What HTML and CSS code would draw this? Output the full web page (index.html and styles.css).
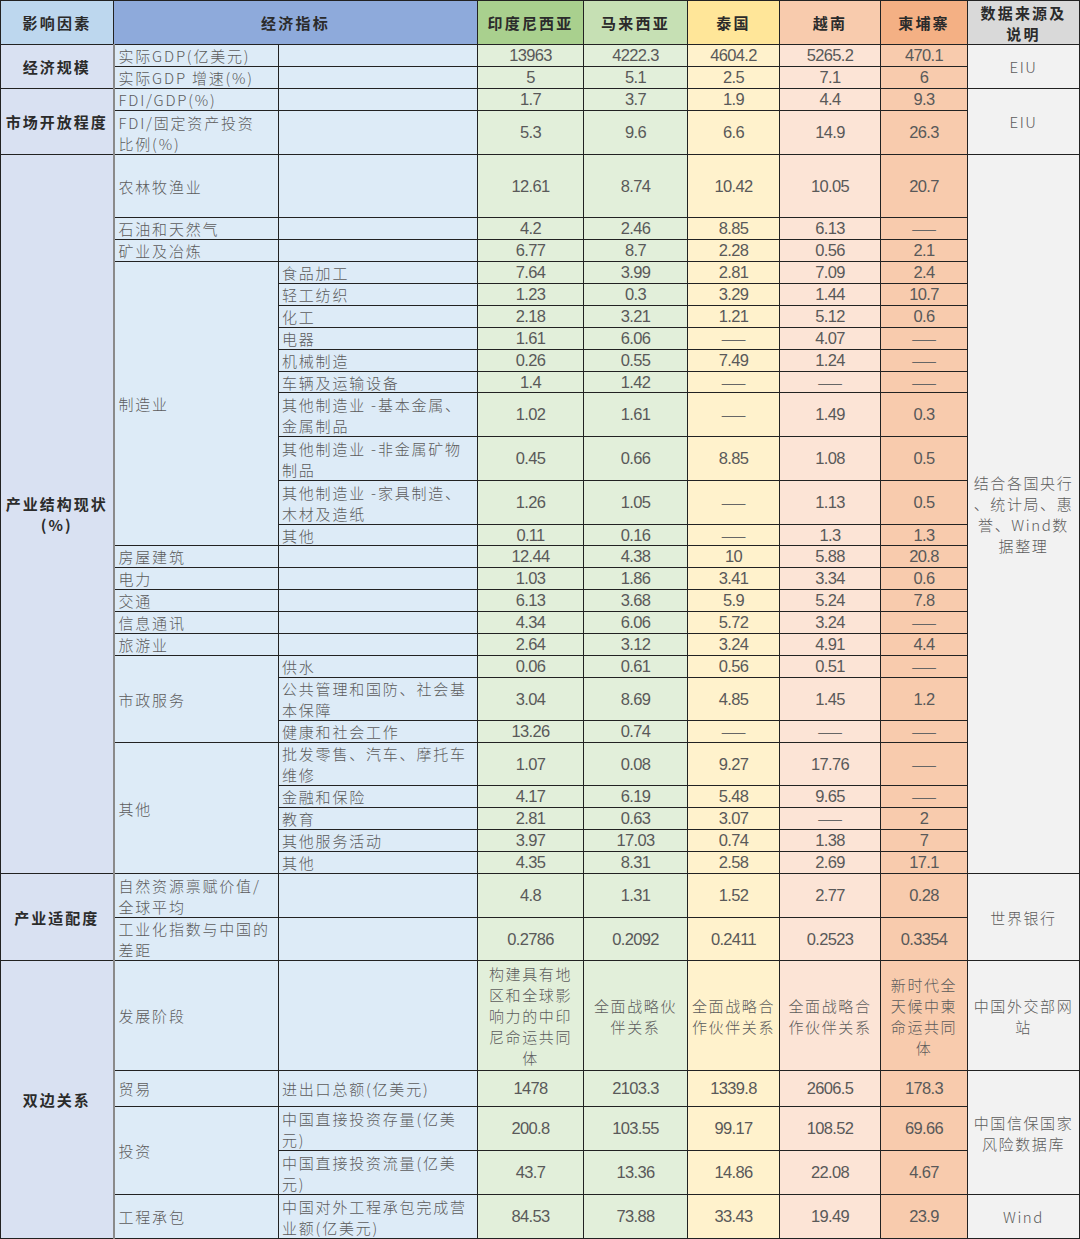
FILE: index.html
```html
<!DOCTYPE html>
<html lang="zh-CN">
<head>
<meta charset="utf-8">
<title>影响因素与经济指标</title>
<link rel="stylesheet" href="styles.css">
</head>
<body>
<table class="grid">
  <colgroup>
    <col class="w-a"><col class="w-b"><col class="w-c"><col class="w-d"><col class="w-e"><col class="w-f"><col class="w-g"><col class="w-h"><col class="w-i">
  </colgroup>
  <thead>
    <tr class="r44">
      <th class="hd-a">影响因素</th>
      <th class="hd-b" colspan="2">经济指标</th>
      <th class="hd-d">印度尼西亚</th>
      <th class="hd-e">马来西亚</th>
      <th class="hd-f">泰国</th>
      <th class="hd-g">越南</th>
      <th class="hd-h">柬埔寨</th>
      <th class="hd-i">数据来源及<br>说明</th>
    </tr>
  </thead>
  <tbody>
    <tr class="r22">
      <td class="f" rowspan="2">经济规模</td>
      <td class="b">实际GDP(亿美元)</td><td class="c"></td>
      <td class="d n">13963</td><td class="e n">4222.3</td><td class="t n">4604.2</td><td class="v n">5265.2</td><td class="k n">470.1</td>
      <td class="s" rowspan="2">EIU</td>
    </tr>
    <tr class="r22">
      <td class="b">实际GDP 增速(%)</td><td class="c"></td>
      <td class="d n">5</td><td class="e n">5.1</td><td class="t n">2.5</td><td class="v n">7.1</td><td class="k n">6</td>
    </tr>
    <tr class="r22">
      <td class="f" rowspan="2">市场开放程度</td>
      <td class="b">FDI/GDP(%)</td><td class="c"></td>
      <td class="d n">1.7</td><td class="e n">3.7</td><td class="t n">1.9</td><td class="v n">4.4</td><td class="k n">9.3</td>
      <td class="s" rowspan="2">EIU</td>
    </tr>
    <tr class="r44">
      <td class="b">FDI/固定资产投资<br>比例(%)</td><td class="c"></td>
      <td class="d n">5.3</td><td class="e n">9.6</td><td class="t n">6.6</td><td class="v n">14.9</td><td class="k n">26.3</td>
    </tr>

    <tr class="r63">
      <td class="f" rowspan="26">产业结构现状<br>(%)</td>
      <td class="b">农林牧渔业</td><td class="c"></td>
      <td class="d n">12.61</td><td class="e n">8.74</td><td class="t n">10.42</td><td class="v n">10.05</td><td class="k n">20.7</td>
      <td class="s" rowspan="26">结合各国央行<br>、统计局、惠<br>誉、Wind数<br>据整理</td>
    </tr>
    <tr class="r22">
      <td class="b">石油和天然气</td><td class="c"></td>
      <td class="d n">4.2</td><td class="e n">2.46</td><td class="t n">8.85</td><td class="v n">6.13</td><td class="k n dash">——</td>
    </tr>
    <tr class="r22">
      <td class="b">矿业及冶炼</td><td class="c"></td>
      <td class="d n">6.77</td><td class="e n">8.7</td><td class="t n">2.28</td><td class="v n">0.56</td><td class="k n">2.1</td>
    </tr>
    <tr class="r22">
      <td class="b" rowspan="10">制造业</td>
      <td class="c">食品加工</td>
      <td class="d n">7.64</td><td class="e n">3.99</td><td class="t n">2.81</td><td class="v n">7.09</td><td class="k n">2.4</td>
    </tr>
    <tr class="r22">
      <td class="c">轻工纺织</td>
      <td class="d n">1.23</td><td class="e n">0.3</td><td class="t n">3.29</td><td class="v n">1.44</td><td class="k n">10.7</td>
    </tr>
    <tr class="r22">
      <td class="c">化工</td>
      <td class="d n">2.18</td><td class="e n">3.21</td><td class="t n">1.21</td><td class="v n">5.12</td><td class="k n">0.6</td>
    </tr>
    <tr class="r22">
      <td class="c">电器</td>
      <td class="d n">1.61</td><td class="e n">6.06</td><td class="t n dash">——</td><td class="v n">4.07</td><td class="k n dash">——</td>
    </tr>
    <tr class="r22">
      <td class="c">机械制造</td>
      <td class="d n">0.26</td><td class="e n">0.55</td><td class="t n">7.49</td><td class="v n">1.24</td><td class="k n dash">——</td>
    </tr>
    <tr class="r21">
      <td class="c">车辆及运输设备</td>
      <td class="d n">1.4</td><td class="e n">1.42</td><td class="t n dash">——</td><td class="v n dash">——</td><td class="k n dash">——</td>
    </tr>
    <tr class="r44">
      <td class="c">其他制造业 -基本金属、<br>金属制品</td>
      <td class="d n">1.02</td><td class="e n">1.61</td><td class="t n dash">——</td><td class="v n">1.49</td><td class="k n">0.3</td>
    </tr>
    <tr class="r44">
      <td class="c">其他制造业 -非金属矿物<br>制品</td>
      <td class="d n">0.45</td><td class="e n">0.66</td><td class="t n">8.85</td><td class="v n">1.08</td><td class="k n">0.5</td>
    </tr>
    <tr class="r44">
      <td class="c">其他制造业 -家具制造、<br>木材及造纸</td>
      <td class="d n">1.26</td><td class="e n">1.05</td><td class="t n dash">——</td><td class="v n">1.13</td><td class="k n">0.5</td>
    </tr>
    <tr class="r21">
      <td class="c">其他</td>
      <td class="d n">0.11</td><td class="e n">0.16</td><td class="t n dash">——</td><td class="v n">1.3</td><td class="k n">1.3</td>
    </tr>
    <tr class="r22">
      <td class="b">房屋建筑</td><td class="c"></td>
      <td class="d n">12.44</td><td class="e n">4.38</td><td class="t n">10</td><td class="v n">5.88</td><td class="k n">20.8</td>
    </tr>
    <tr class="r22">
      <td class="b">电力</td><td class="c"></td>
      <td class="d n">1.03</td><td class="e n">1.86</td><td class="t n">3.41</td><td class="v n">3.34</td><td class="k n">0.6</td>
    </tr>
    <tr class="r22">
      <td class="b">交通</td><td class="c"></td>
      <td class="d n">6.13</td><td class="e n">3.68</td><td class="t n">5.9</td><td class="v n">5.24</td><td class="k n">7.8</td>
    </tr>
    <tr class="r22">
      <td class="b">信息通讯</td><td class="c"></td>
      <td class="d n">4.34</td><td class="e n">6.06</td><td class="t n">5.72</td><td class="v n">3.24</td><td class="k n dash">——</td>
    </tr>
    <tr class="r22">
      <td class="b">旅游业</td><td class="c"></td>
      <td class="d n">2.64</td><td class="e n">3.12</td><td class="t n">3.24</td><td class="v n">4.91</td><td class="k n">4.4</td>
    </tr>
    <tr class="r22">
      <td class="b" rowspan="3">市政服务</td>
      <td class="c">供水</td>
      <td class="d n">0.06</td><td class="e n">0.61</td><td class="t n">0.56</td><td class="v n">0.51</td><td class="k n dash">——</td>
    </tr>
    <tr class="r43">
      <td class="c">公共管理和国防、社会基<br>本保障</td>
      <td class="d n">3.04</td><td class="e n">8.69</td><td class="t n">4.85</td><td class="v n">1.45</td><td class="k n">1.2</td>
    </tr>
    <tr class="r22">
      <td class="c">健康和社会工作</td>
      <td class="d n">13.26</td><td class="e n">0.74</td><td class="t n dash">——</td><td class="v n dash">——</td><td class="k n dash">——</td>
    </tr>
    <tr class="r43">
      <td class="b" rowspan="5">其他</td>
      <td class="c">批发零售、汽车、摩托车<br>维修</td>
      <td class="d n">1.07</td><td class="e n">0.08</td><td class="t n">9.27</td><td class="v n">17.76</td><td class="k n dash">——</td>
    </tr>
    <tr class="r22">
      <td class="c">金融和保险</td>
      <td class="d n">4.17</td><td class="e n">6.19</td><td class="t n">5.48</td><td class="v n">9.65</td><td class="k n dash">——</td>
    </tr>
    <tr class="r22">
      <td class="c">教育</td>
      <td class="d n">2.81</td><td class="e n">0.63</td><td class="t n">3.07</td><td class="v n dash">——</td><td class="k n">2</td>
    </tr>
    <tr class="r22">
      <td class="c">其他服务活动</td>
      <td class="d n">3.97</td><td class="e n">17.03</td><td class="t n">0.74</td><td class="v n">1.38</td><td class="k n">7</td>
    </tr>
    <tr class="r22">
      <td class="c">其他</td>
      <td class="d n">4.35</td><td class="e n">8.31</td><td class="t n">2.58</td><td class="v n">2.69</td><td class="k n">17.1</td>
    </tr>

    <tr class="r44">
      <td class="f" rowspan="2">产业适配度</td>
      <td class="b">自然资源禀赋价值/<br>全球平均</td><td class="c"></td>
      <td class="d n">4.8</td><td class="e n">1.31</td><td class="t n">1.52</td><td class="v n">2.77</td><td class="k n">0.28</td>
      <td class="s" rowspan="2">世界银行</td>
    </tr>
    <tr class="r43">
      <td class="b">工业化指数与中国的<br>差距</td><td class="c"></td>
      <td class="d n">0.2786</td><td class="e n">0.2092</td><td class="t n">0.2411</td><td class="v n">0.2523</td><td class="k n">0.3354</td>
    </tr>

    <tr class="r110">
      <td class="f" rowspan="5">双边关系</td>
      <td class="b">发展阶段</td><td class="c"></td>
      <td class="d m">构建具有地<br>区和全球影<br>响力的中印<br>尼命运共同<br>体</td>
      <td class="e m">全面战略伙<br>伴关系</td>
      <td class="t m">全面战略合<br>作伙伴关系</td>
      <td class="v m">全面战略合<br>作伙伴关系</td>
      <td class="k m">新时代全<br>天候中柬<br>命运共同<br>体</td>
      <td class="s">中国外交部网<br>站</td>
    </tr>
    <tr class="r36">
      <td class="b">贸易</td>
      <td class="c">进出口总额(亿美元)</td>
      <td class="d n">1478</td><td class="e n">2103.3</td><td class="t n">1339.8</td><td class="v n">2606.5</td><td class="k n">178.3</td>
      <td class="s" rowspan="3">中国信保国家<br>风险数据库</td>
    </tr>
    <tr class="r44">
      <td class="b" rowspan="2">投资</td>
      <td class="c">中国直接投资存量(亿美<br>元)</td>
      <td class="d n">200.8</td><td class="e n">103.55</td><td class="t n">99.17</td><td class="v n">108.52</td><td class="k n">69.66</td>
    </tr>
    <tr class="r44">
      <td class="c">中国直接投资流量(亿美<br>元)</td>
      <td class="d n">43.7</td><td class="e n">13.36</td><td class="t n">14.86</td><td class="v n">22.08</td><td class="k n">4.67</td>
    </tr>
    <tr class="r44">
      <td class="b">工程承包</td>
      <td class="c">中国对外工程承包完成营<br>业额(亿美元)</td>
      <td class="d n">84.53</td><td class="e n">73.88</td><td class="t n">33.43</td><td class="v n">19.49</td><td class="k n">23.9</td>
      <td class="s">Wind</td>
    </tr>
  </tbody>
</table>
</body>
</html>
```

FILE: styles.css
```css
html, body {
  margin: 0;
  padding: 0;
  background: #ffffff;
}

.grid {
  border-collapse: collapse;
  table-layout: fixed;
  width: 1079px;
  font-family: "Noto Sans CJK SC", "Noto Sans", sans-serif;
  font-weight: 300;
  font-size: 15px;
  letter-spacing: 1.8px;
  color: #5c5c5c;
}

.w-a { width: 113px; }
.w-b { width: 165px; }
.w-c { width: 199px; }
.w-d { width: 106px; }
.w-e { width: 104px; }
.w-f { width: 92px; }
.w-g { width: 101px; }
.w-h { width: 87px; }
.w-i { width: 112px; }

.grid th,
.grid td {
  border: 1px solid #222222;
  padding: 0 3px;
  line-height: 21px;
  white-space: nowrap;
  overflow: hidden;
  vertical-align: middle;
}

/* row heights */
.r21 { height: 21px; }
.r22 { height: 22px; }
.r36 { height: 36px; }
.r43 { height: 43px; }
.r44 { height: 44px; }
.r63 { height: 63px; }
.r110 { height: 110px; }

.grid .r21 td,
.grid .r22 td { line-height: 19px; }

/* header */
.grid th {
  font-weight: 700;
  color: #2b2b2b;
  text-align: center;
  letter-spacing: 2.2px;
}
.hd-a { background: #bdd7ee; border-right: 2px solid #8a8a8a; }
.hd-b { background: #8eaadb; }
.hd-d { background: #a9d08e; }
.hd-e { background: #c6e0b4; }
.hd-f { background: #ffe699; }
.hd-g { background: #f8cbad; }
.hd-h { background: #f4b084; }
.hd-i { background: #d9d9d9; }

/* body columns */
.f {
  background: #d9e1f2;
  border-right: 2px solid #8a8a8a;
  text-align: center;
  font-weight: 700;
  color: #2b2b2b;
  letter-spacing: 2px;
}
.grid .b { background: #ddebf7; padding-left: 4px; border-left: 2px solid #8a8a8a; }
.grid .c { background: #ddebf7; padding-left: 3px; }
.d, .e { background: #e2efda; }
.t { background: #fff2cc; }
.v { background: #fce4d6; }
.k { background: #f8cbad; }
.s {
  background: #f2f2f2;
  text-align: center;
  letter-spacing: 1.6px;
}

/* numbers */
.n {
  text-align: center;
  font-family: "Liberation Sans", Arial, sans-serif;
  font-weight: 400;
  font-size: 16.5px;
  letter-spacing: -0.7px;
  color: #595959;
}
.grid .r21 .n,
.grid .r22 .n { line-height: 19px; }
.n.dash {
  font-family: "Noto Sans CJK SC", sans-serif;
  font-weight: 400;
  font-size: 15px;
  letter-spacing: 0;
  color: #666666;
}

/* multi-line text in data cells */
.m {
  text-align: center;
  letter-spacing: 1.6px;
}
```
